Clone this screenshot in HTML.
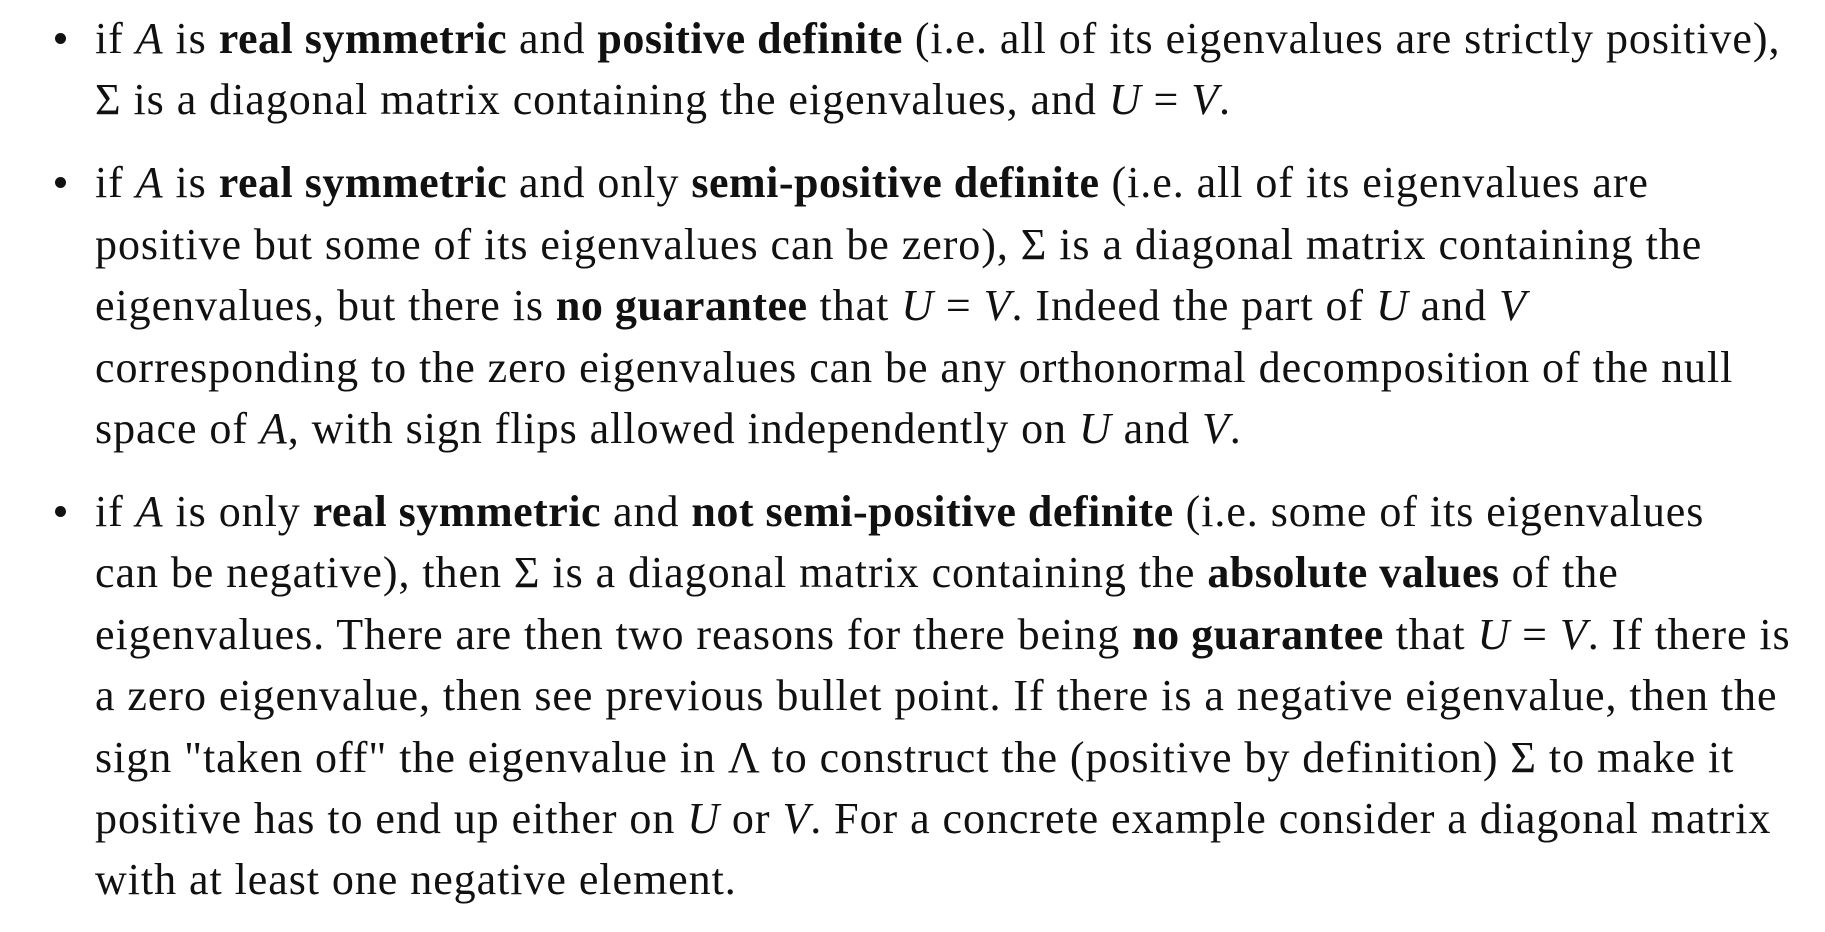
<!DOCTYPE html>
<html><head><meta charset="utf-8"><style>
html,body{margin:0;padding:0;background:#fff;width:1825px;height:918px;overflow:hidden}
body{font-family:"Liberation Serif","DejaVu Serif",serif;font-size:44px;color:#111;letter-spacing:0.95px}
ul{margin:0;padding:0;list-style:none;position:absolute;left:95px;top:8px}
li{position:relative;line-height:61.4px;white-space:nowrap;margin-bottom:21.6px}
li::before{content:"";position:absolute;left:-40px;top:25px;width:11px;height:11px;border-radius:50%;background:#111}
i{font-style:italic}
b{font-weight:bold;letter-spacing:0.5px}
</style></head><body>
<ul>
<li>if <i>A</i> is <b>real symmetric</b> and <b>positive definite</b> (i.e. all of its eigenvalues are strictly positive),<br>Σ is a diagonal matrix containing the eigenvalues, and <i>U</i> = <i>V</i>.</li>
<li>if <i>A</i> is <b>real symmetric</b> and only <b>semi-positive definite</b> (i.e. all of its eigenvalues are<br>positive but some of its eigenvalues can be zero), Σ is a diagonal matrix containing the<br>eigenvalues, but there is <b>no guarantee</b> that <i>U</i> = <i>V</i>. Indeed the part of <i>U</i> and <i>V</i><br>corresponding to the zero eigenvalues can be any orthonormal decomposition of the null<br>space of <i>A</i>, with sign flips allowed independently on <i>U</i> and <i>V</i>.</li>
<li>if <i>A</i> is only <b>real symmetric</b> and <b>not semi-positive definite</b> (i.e. some of its eigenvalues<br>can be negative), then Σ is a diagonal matrix containing the <b>absolute values</b> of the<br>eigenvalues. There are then two reasons for there being <b>no guarantee</b> that <i>U</i> = <i>V</i>. If there is<br>a zero eigenvalue, then see previous bullet point. If there is a negative eigenvalue, then the<br>sign "taken off" the eigenvalue in Λ to construct the (positive by definition) Σ to make it<br>positive has to end up either on <i>U</i> or <i>V</i>. For a concrete example consider a diagonal matrix<br>with at least one negative element.</li>
</ul>
</body></html>
